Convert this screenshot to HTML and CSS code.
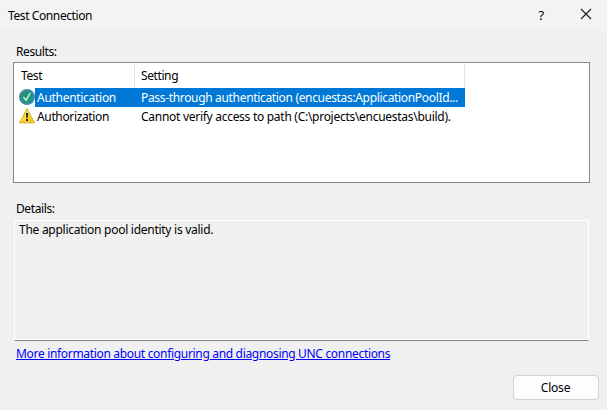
FILE: index.html
```html
<!DOCTYPE html>
<html lang="en">
<head>
<meta charset="utf-8">
<title>Test Connection</title>
<link rel="stylesheet" href="styles.css">
</head>
<body>
<div class="dialog">
  <header class="titlebar">
    <span class="title">Test Connection</span>
    <span class="help">?</span>
    <svg class="close-x" width="12" height="12" viewBox="0 0 12 12"><path d="M1 1 11 11M11 1 1 11" stroke="#1a1a1a" stroke-width="1.1" fill="none"/></svg>
  </header>
  <main class="content">
    <div class="label"><span>Results:</span></div>
    <section class="results">
      <div class="row head">
        <div class="cell name"><span>Test</span></div>
        <div class="cell setting"><span>Setting</span></div>
      </div>
      <div class="row selected">
        <svg class="icon" width="16" height="16" viewBox="0 0 16 16">
          <defs><linearGradient id="ok" x2="1" y2="1"><stop offset="0" stop-color="#2b8f68"/><stop offset="1" stop-color="#119c80"/></linearGradient></defs>
          <circle cx="8" cy="8" r="7.1" fill="url(#ok)" stroke="#4a86b4" stroke-width="1.8"/>
          <path d="M4.4 8 7.1 11.2 11.2 4.2" fill="none" stroke="#c9eee9" stroke-width="1.4"/>
        </svg>
        <div class="cell name"><span class="t-authn">Authentication</span></div>
        <div class="cell setting"><span class="t-pass">Pass-through authentication (encuestas:ApplicationPoolId...</span></div>
      </div>
      <div class="row">
        <svg class="icon" width="16" height="16" viewBox="0 0 16 16">
          <defs><linearGradient id="warn" x2="1" y2="1"><stop offset="0" stop-color="#fff27a"/><stop offset="1" stop-color="#f3c400"/></linearGradient></defs>
          <path d="M8 .8 15.5 14.8H.5Z" fill="url(#warn)" stroke="#d5a928" stroke-linejoin="round"/>
          <path d="M7 5H9L8.6 10H7.4ZM7.1 11H8.9V13H7.1Z" fill="#111"/>
        </svg>
        <div class="cell name"><span class="t-authz">Authorization</span></div>
        <div class="cell setting"><span class="t-cannot">Cannot verify access to path (C:\projects\encuestas\build).</span></div>
      </div>
    </section>
    <div class="label details-label"><span>Details:</span></div>
    <section class="details"><span class="t-valid">The application pool identity is valid.</span></section>
    <a class="link" href="#"><span class="t-link">More information about configuring and diagnosing UNC connections</span></a>
  </main>
  <footer class="footer"><button class="button"><span class="t-close">Close</span></button></footer>
</div>
</body>
</html>
```
FILE: styles.css
```css
* { box-sizing: border-box; }
body { margin: 0; font: 12px/16px "Noto Sans", "Open Sans", sans-serif; color: #000; }
.dialog { width: 607px; height: 410px; background: #f0f0f0; display: flex; flex-direction: column; overflow: hidden; }
.dialog span { white-space: nowrap; letter-spacing: -0.4px; }
.dialog .t-authn { letter-spacing: -0.29px; }
.dialog .t-pass { letter-spacing: -0.33px; }
.dialog .t-authz { letter-spacing: -0.35px; }
.dialog .t-cannot { letter-spacing: -0.28px; }
.dialog .t-valid { letter-spacing: -0.27px; }
.dialog .t-link { letter-spacing: -0.32px; }
.dialog .t-close { letter-spacing: -0.2px; }
.titlebar { height: 30px; background: #f3f3f3; display: flex; align-items: center; padding-left: 8px; }
.title { flex: 1; padding-top: 1px; }
.help { width: 8px; text-align: center; margin-right: 35px; font-size: 13px; }
.close-x { margin-right: 15px; margin-top: -2px; }
.content { padding: 14px 17px 0 13px; display: flex; flex-direction: column; }
.label { height: 18px; padding-left: 3px; }
.results { height: 121px; background: #fff; border: 1px solid #828790; padding-top: 1px; }
.row { display: flex; width: 451px; height: 19px; padding-left: 5px; line-height: 20px; }
.row.head { height: 24px; padding-left: 0; line-height: 24px; }
.icon { flex: none; margin-top: 1px; }
.cell { overflow: hidden; }
.name { width: 100px; padding-left: 2px; }
.setting { flex: 1; padding-left: 6px; }
.head .name { width: 121px; padding-left: 7px; border-right: 1px solid #e5e5e5; }
.head .setting { border-right: 1px solid #e5e5e5; }
.selected .cell { background: #0078d7; color: #fff; }
.details-label { margin-top: 18px; }
.details { height: 121px; margin: 1px 1px 0; border: 1px solid #fff; border-bottom-color: #828282; box-shadow: inset 0 -1px #fff; padding: 1px 4px; }
.link { color: #0000ff; height: 18px; margin-top: 5px; padding-left: 3px; }
.footer { display: flex; justify-content: flex-end; padding: 11px 8px 0 0; }
.button { width: 86px; height: 25px; border: 1px solid #d0d0d0; border-radius: 4px; background: #fdfdfd; font: inherit; color: #000; padding: 1px 1px 0 0; }
```
